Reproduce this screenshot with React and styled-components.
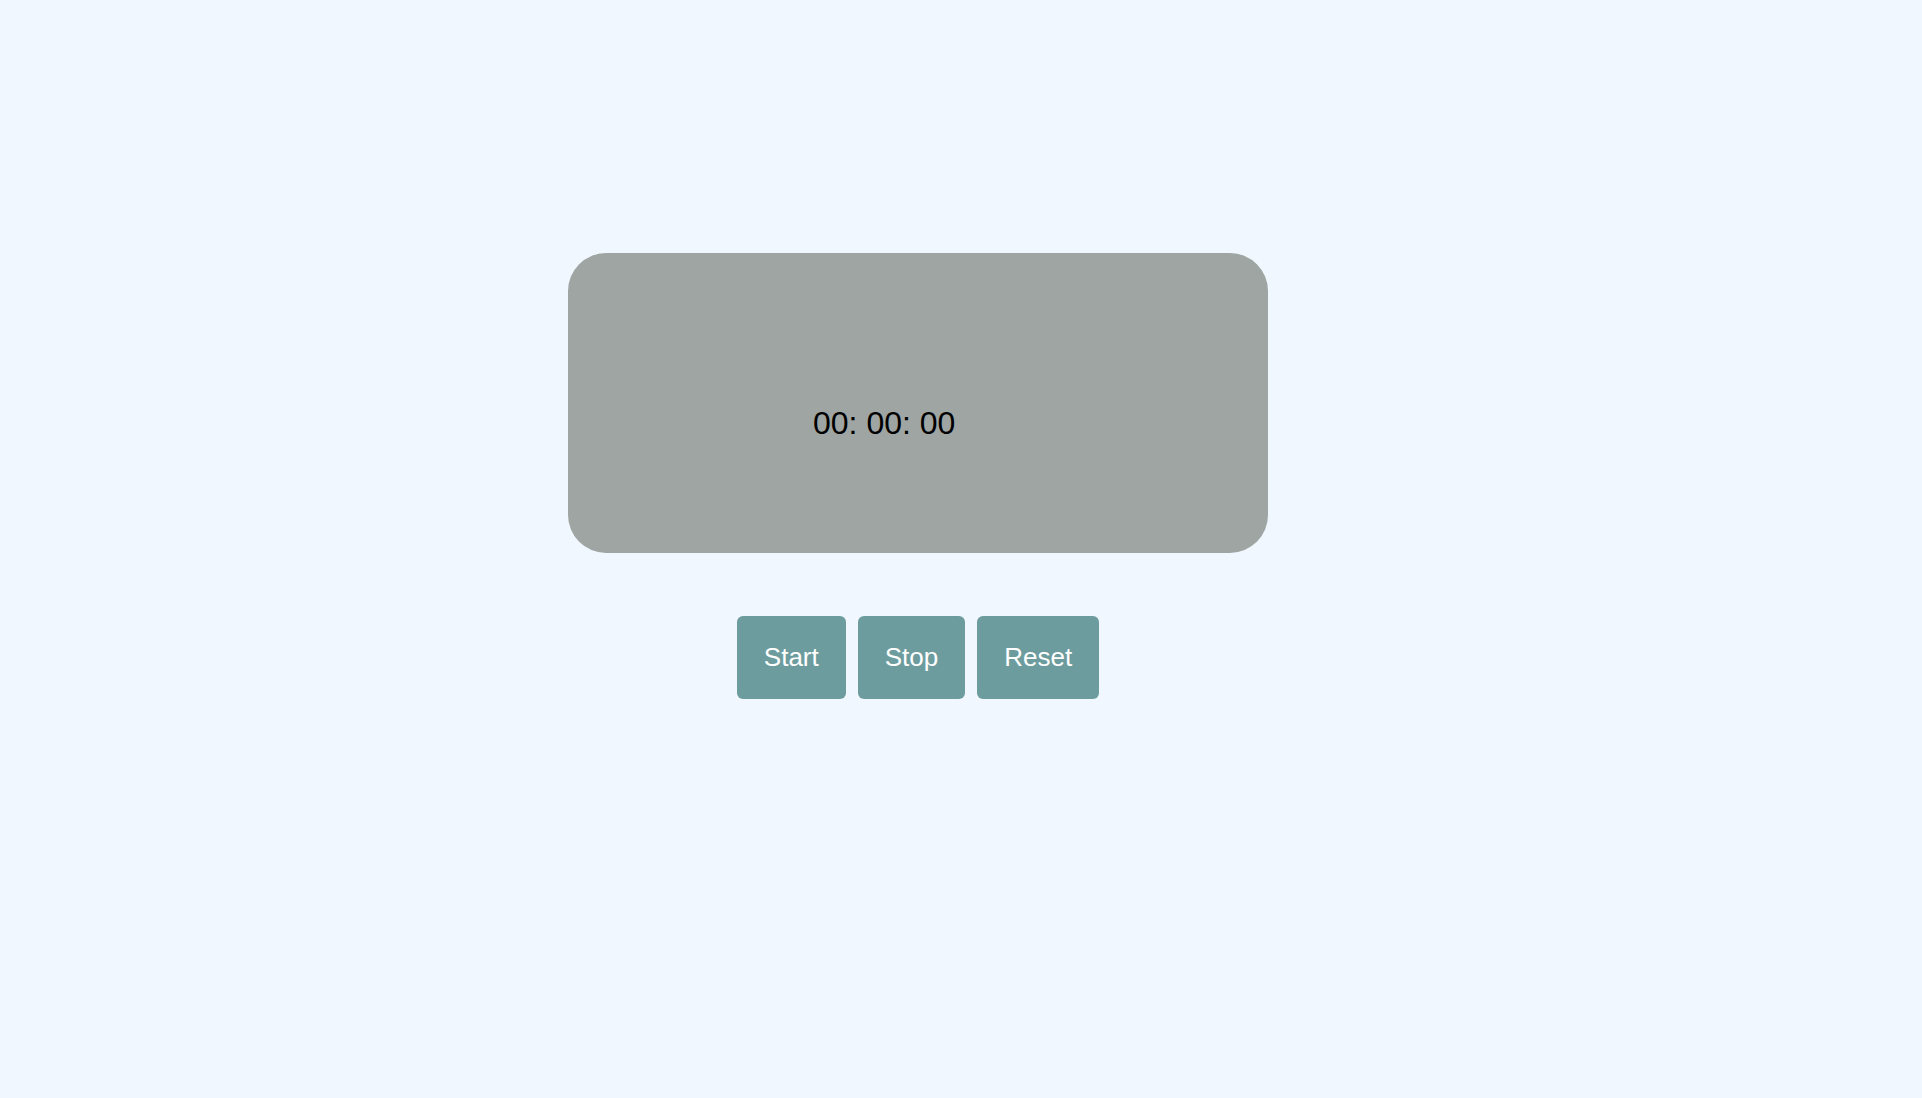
import React from "react";
import styled, { createGlobalStyle } from "styled-components";

const GlobalStyle = createGlobalStyle`
  html, body {
    margin: 0;
    padding: 0;
    background: #f1f7fe;
    font-family: "Liberation Sans", Arial, Helvetica, sans-serif;
  }
`;

const Page = styled.main`
  min-height: 1098px;
  box-sizing: border-box;
  padding: 253px 0 0 568px;
`;

const Stopwatch = styled.section`
  width: 700px;
  display: flex;
  flex-direction: column;
  align-items: center;
  gap: 63px;
`;

const Display = styled.div`
  width: 700px;
  height: 300px;
  box-sizing: border-box;
  background: #9ea5a2;
  border-radius: 38px;
  display: flex;
  align-items: center;
  padding: 40px 0 0 245px;
`;

const Time = styled.span`
  font-size: 32px;
  color: #000;
`;

const Controls = styled.div`
  display: flex;
  gap: 12px;
`;

const Button = styled.button`
  font-family: "Liberation Sans", Arial, Helvetica, sans-serif;
  font-size: 26px;
  line-height: normal;
  color: #ffffff;
  background: #6d9c9e;
  border: none;
  border-radius: 6px;
  padding: 26px 27px;
  cursor: pointer;
`;

export default function App() {
  return (
    <>
      <GlobalStyle />
      <Page>
        <Stopwatch>
          <Display>
            <Time>00: 00: 00</Time>
          </Display>
          <Controls>
            <Button>Start</Button>
            <Button>Stop</Button>
            <Button>Reset</Button>
          </Controls>
        </Stopwatch>
      </Page>
    </>
  );
}
